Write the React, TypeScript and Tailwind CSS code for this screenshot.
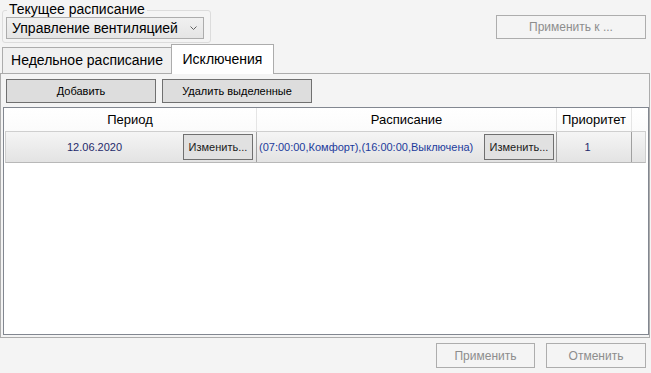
export default function App() {
  return (
    <div className="w-[651px] h-[373px] bg-[#f4f4f4] flex flex-col text-black font-['Liberation_Sans',Arial,sans-serif] overflow-hidden">
      {/* top row */}
      <div className="flex h-[44px] justify-between shrink-0">
        <div className="relative ml-[2px] mt-[10px] w-[209px] h-[33px] border border-[#dcdcdc] rounded-[3px]">
          <span className="absolute left-[4px] -top-[9px] px-[2px] bg-[#f4f4f4] text-[14px] leading-[14px] whitespace-nowrap">
            Текущее расписание
          </span>
          <div className="ml-[3px] mt-[6px] w-[198px] h-[22px] border border-[#acacac] bg-gradient-to-b from-[#f0f0f0] to-[#e5e5e5] flex items-center pl-[5px] pr-[6px] text-[14px] leading-[16px]">
            <span className="flex-1 whitespace-nowrap">Управление вентиляцией</span>
            <svg width="7" height="5" viewBox="0 0 7 5" className="shrink-0">
              <path d="M0.5 0.5 L3.5 3.5 L6.5 0.5" fill="none" stroke="#606060" strokeWidth="1" />
            </svg>
          </div>
        </div>
        <button className="mt-[15px] mr-[5px] w-[150px] h-[24px] border border-[#adadad] bg-[#f4f4f4] text-[12px] text-[#8d8d8d]">
          Применить к ...
        </button>
      </div>

      {/* tabs */}
      <div className="flex items-end h-[29px] pl-[2px] shrink-0">
        <div className="h-[26px] w-[169px] border border-r-0 border-b-0 border-[#acacac] bg-[#f0f0f0] text-[14px] flex items-center justify-center whitespace-nowrap">
          Недельное расписание
        </div>
        <div className="relative z-10 -mb-px h-[30px] w-[103px] border border-b-0 border-[#acacac] bg-white text-[14px] flex items-center justify-center whitespace-nowrap">
          Исключения
        </div>
      </div>

      {/* panel */}
      <div className="flex flex-col h-[265px] w-[650px] border border-[#acacac] bg-[#f4f4f4] shrink-0">
        <div className="flex gap-[6px] ml-[5px] mt-[5px]">
          <button className="w-[150px] h-[24px] border border-[#707070] bg-[#dddddd] text-[11px]">Добавить</button>
          <button className="w-[150px] h-[24px] border border-[#707070] bg-[#dddddd] text-[11px]">Удалить выделенные</button>
        </div>
        <div className="ml-[2px] mt-[4px] w-[646px] h-[228px] border border-[#828790] bg-white flex flex-col">
          {/* header */}
          <div className="flex h-[23px] text-[13px] bg-gradient-to-b from-white to-[#fbfbfb]">
            <div className="w-[253px] border-r border-[#e5e5e5] flex items-center justify-center">Период</div>
            <div className="w-[300px] border-r border-[#e5e5e5] flex items-center justify-center">Расписание</div>
            <div className="w-[75px] border-r border-[#e5e5e5] flex items-center justify-center">Приоритет</div>
            <div className="flex-1" />
          </div>
          {/* row */}
          <div className="ml-[1px] w-[641px] h-[32px] flex border border-[#cfcfcf] border-b-[#b8b8b8] bg-gradient-to-b from-[#f5f5f5] to-[#e3e3e3] text-[11px]">
            <div className="w-[251px] border-r border-[#a0a0a0] flex items-center">
              <span className="flex-1 text-center text-[#1f2a6b]">12.06.2020</span>
              <button className="mr-[3px] w-[70px] h-[26px] border border-[#707070] bg-[#e1e1e1] text-[11px] text-[#1a1a1a]">Изменить...</button>
            </div>
            <div className="w-[300px] border-r border-[#a0a0a0] flex items-center justify-between pl-[2px]">
              <span className="text-[#1c3b9c] whitespace-nowrap">(07:00:00,Комфорт),(16:00:00,Выключена)</span>
              <button className="mr-[2px] w-[70px] h-[26px] border border-[#707070] bg-[#e1e1e1] text-[11px] text-[#1a1a1a]">Изменить...</button>
            </div>
            <div className="w-[75px] border-r border-[#a0a0a0] flex items-center justify-center pr-[13px] text-[#1f2a6b]">1</div>
            <div className="flex-1" />
          </div>
        </div>
      </div>

      {/* bottom */}
      <div className="flex justify-end gap-[11px] mr-[5px] mt-[5px]">
        <button className="w-[99px] h-[25px] border border-[#adadad] bg-[#f4f4f4] text-[12px] text-[#8d8d8d]">Применить</button>
        <button className="w-[100px] h-[25px] border border-[#adadad] bg-[#f4f4f4] text-[12px] text-[#8d8d8d]">Отменить</button>
      </div>
    </div>
  );
}
